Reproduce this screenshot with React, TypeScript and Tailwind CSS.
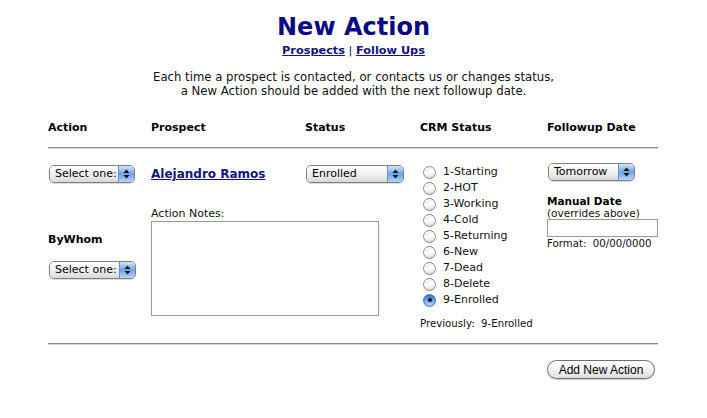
import React from "react";

const font = { fontFamily: '"DejaVu Sans", Verdana, sans-serif' };

function Arrows() {
  return (
    <svg width="7" height="10" viewBox="0 0 7 10">
      <path d="M3.5 0.5 L6.5 4 L0.5 4 Z" fill="#111" />
      <path d="M3.5 9.5 L6.5 6 L0.5 6 Z" fill="#111" />
    </svg>
  );
}

function AquaSelect({ label, className }: { label: string; className: string }) {
  return (
    <div
      className={
        "flex h-[18px] items-stretch overflow-hidden rounded-[5px] border border-[#7f7f7f] shadow-[0_1px_1px_rgba(0,0,0,0.15)] " +
        className
      }
    >
      <div className="flex flex-1 items-center bg-gradient-to-b from-white via-[#f1f1f1] to-[#d9d9d9] pl-[5px] text-[11px] leading-[16px] text-black">
        {label}
      </div>
      <div className="flex w-[16px] items-center justify-center border-l border-[#6a8fc4] bg-gradient-to-b from-[#d3e5fb] via-[#6da2e8] to-[#b4d3f8]">
        <Arrows />
      </div>
    </div>
  );
}

function Radio({ label, checked }: { label: string; checked?: boolean }) {
  return (
    <div className="flex h-[16px] items-center">
      <div
        className={
          "ml-[3px] flex h-[13px] w-[13px] items-center justify-center rounded-full border " +
          (checked
            ? "border-[#3f6fb0] bg-gradient-to-b from-[#2f78d8] via-[#6aa6ec] to-[#b9d8fa]"
            : "border-[#8c8c8c] bg-gradient-to-b from-[#f4f4f4] via-[#ffffff] to-[#dcdcdc]")
        }
      >
        {checked && <div className="h-[4px] w-[4px] rounded-full bg-[#111]" />}
      </div>
      <span className="ml-[7px] text-[11px] leading-[14px] text-[#111]">{label}</span>
    </div>
  );
}

function Hr() {
  return <div className="h-[2px] w-full border-t border-b border-t-[#8a8a8a] border-b-[#d6d6d6]" />;
}

export default function App() {
  const statuses = [
    "1-Starting",
    "2-HOT",
    "3-Working",
    "4-Cold",
    "5-Returning",
    "6-New",
    "7-Dead",
    "8-Delete",
    "9-Enrolled",
  ];
  return (
    <div className="h-[418px] w-[707px] bg-white text-black" style={font}>
      <div className="flex flex-col items-center pt-[13px]">
        <h1 className="text-[24px] font-bold leading-[28px] text-[#0a0a84]">New Action</h1>
        <div className="mt-[3px] text-[11.3px] leading-[14px] text-[#111]">
          <a className="font-bold text-[#14147e] underline">Prospects</a>
          <span> | </span>
          <a className="font-bold text-[#14147e] underline">Follow Ups</a>
        </div>
        <p className="mt-[12px] text-center text-[11.7px] leading-[14px] text-[#111]">
          Each time a prospect is contacted, or contacts us or changes status,
          <br />
          a New Action should be added with the next followup date.
        </p>
      </div>

      <div className="mx-auto mt-[23px] w-[611px] pr-[1px]">
        <div className="flex text-[11px] font-bold leading-[14px]">
          <div className="w-[103px]">Action</div>
          <div className="w-[154px]">Prospect</div>
          <div className="w-[115px]">Status</div>
          <div className="w-[127px]">CRM Status</div>
          <div className="flex-1">Followup Date</div>
        </div>
        <div className="mt-[12px]">
          <Hr />
        </div>

        <div className="flex h-[194px]">
          <div className="w-[103px] pt-[16px]">
            <AquaSelect label="Select one:" className="ml-[1px] w-[86px]" />
            <div className="mt-[50px] text-[11px] font-bold leading-[14px]">ByWhom</div>
            <AquaSelect label="Select one:" className="mt-[14px] ml-[1px] w-[87px]" />
          </div>

          <div className="w-[269px] pt-[16px]">
            <div className="flex items-center">
              <a className="w-[155px] text-[12px] font-bold leading-[16px] text-[#14147e] underline">
                Alejandro Ramos
              </a>
              <AquaSelect label="Enrolled" className="w-[98px]" />
            </div>
            <div className="mt-[24px] text-[11px] leading-[14px] text-[#111]">Action Notes:</div>
            <div className="h-[95px] w-[228px] border border-[#9a9a9a] bg-white" />
          </div>

          <div className="w-[127px] pt-[15px]">
            {statuses.map((s) => (
              <Radio key={s} label={s} checked={s === "9-Enrolled"} />
            ))}
            <div className="mt-[9px] whitespace-nowrap text-[10.2px] leading-[14px] text-[#111]">
              Previously:&nbsp; 9-Enrolled
            </div>
          </div>

          <div className="flex-1 pt-[14px]">
            <AquaSelect label="Tomorrow" className="ml-[1px] w-[87px]" />
            <div className="mt-[15px] whitespace-nowrap text-[10.5px] font-bold leading-[11px]">Manual Date</div>
            <div className="whitespace-nowrap text-[10.5px] leading-[12px] text-[#111]">(overrides above)</div>
            <div className="h-[18px] w-[111px] border border-[#9a9a9a] bg-white" />
            <div className="whitespace-nowrap text-[10.2px] leading-[13px] text-[#111]">Format:&nbsp; 00/00/0000</div>
          </div>
        </div>

        <Hr />

        <div className="mt-[15px] flex justify-end pr-[3px]">
          <button
            className="h-[19px] w-[108px] rounded-full border border-[#6f6f6f] bg-gradient-to-b from-white via-[#f3f3f3] to-[#dedede] text-[12px] leading-[16px] text-black shadow-[0_1px_1px_rgba(0,0,0,0.2)]"
            style={{ fontFamily: '"Liberation Sans", Arial, sans-serif' }}
          >
            Add New Action
          </button>
        </div>
      </div>
    </div>
  );
}
